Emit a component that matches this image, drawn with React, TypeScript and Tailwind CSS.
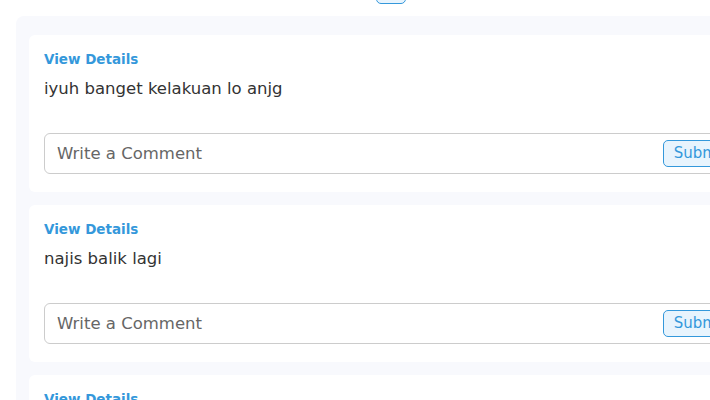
import React from "react";

const posts = ["iyuh banget kelakuan lo anjg", "najis balik lagi", "aduh"];

function Card({ text }: { text: string }) {
  return (
    <div className="bg-white rounded-[6px] pt-[14px] pb-[18px] px-[15px]">
      <div className="text-[13.5px] font-bold text-[#3498db] leading-[20px]">View Details</div>
      <div className="text-[16.5px] text-[#333] leading-[24px] mt-[8px]">{text}</div>
      <div className="relative mt-[32px]">
        <input
          className="w-full h-[41px] border border-[#cccccc] rounded-[6px] pl-[12px] text-[16.5px] text-[#333] placeholder:text-[#666] outline-none"
          placeholder="Write a Comment"
        />
        <button className="absolute right-[8px] top-[7px] h-[27px] px-[10px] text-[15px] text-[#3498db] bg-[#e8f4fd] border border-[#3498db] rounded-[5px] leading-none">
          Submit
        </button>
      </div>
    </div>
  );
}

export default function App() {
  return (
    <div
      className="w-[710px] h-[400px] overflow-hidden bg-white"
      style={{ fontFamily: '"DejaVu Sans", Verdana, sans-serif' }}
    >
      <div className="flex justify-center w-[782px]">
        <div className="w-[30px] h-[24px] mt-[-20px] border border-[#3498db] bg-[#e8f4fd] rounded-[5px]"></div>
      </div>
      <div className="ml-[16px] mt-[12px] w-[758px] bg-[#f8f9fd] rounded-[8px] pt-[19px] px-[13px] flex flex-col gap-[13px]">
        {posts.map((p, i) => (
          <Card key={i} text={p} />
        ))}
      </div>
    </div>
  );
}
